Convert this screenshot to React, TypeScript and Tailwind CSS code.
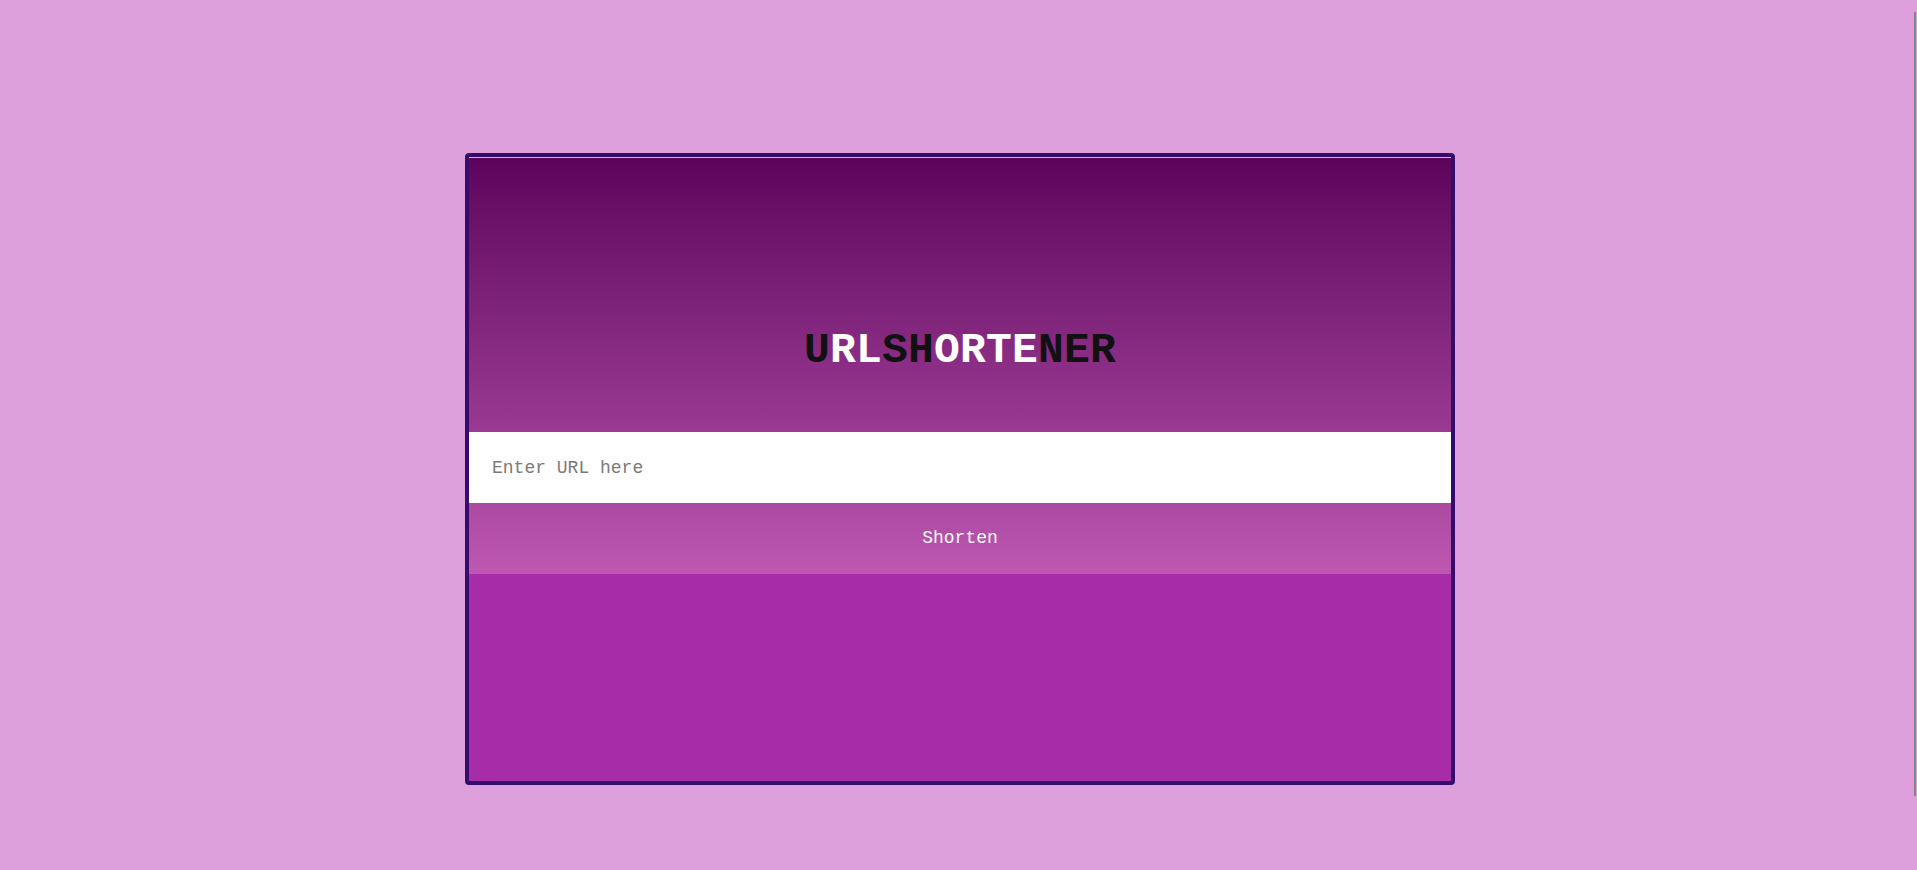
import React from "react";

export default function App() {
  const mono = { fontFamily: '"Liberation Mono", "Courier New", monospace' };
  return (
    <div className="min-h-[870px] w-full bg-[#dda0dd] relative overflow-hidden" style={mono}>
      <div className="flex justify-center pl-[3px] pt-[153px]">
        <div className="w-[990px] h-[632px] border-4 border-[#350b6c] rounded-[4px] bg-[#a72da8] flex flex-col overflow-hidden">
          <div className="h-[275px] border-t border-[#e4a8e4] bg-gradient-to-b from-[#5c045c] to-[#9b3993] flex items-end justify-center pb-[60px]">
            <h1 className="text-[43px] leading-[43px] font-bold tracking-[0.2px] m-0" style={mono}>
              <span className="text-[#111111]">U</span>
              <span className="text-white">RL</span>
              <span className="text-[#111111]">SH</span>
              <span className="text-white">ORTE</span>
              <span className="text-[#111111]">NER</span>
            </h1>
          </div>
          <input
            type="text"
            placeholder="Enter URL here"
            className="h-[71px] w-full bg-white pl-[23px] text-[18px] text-black placeholder:text-[#7a7a7a] outline-none border-0"
            style={mono}
          />
          <button
            className="h-[71px] w-full bg-gradient-to-b from-[#ab49a0] to-[#be58b2] text-white text-[18px] border-0"
            style={mono}
          >
            Shorten
          </button>
        </div>
      </div>
      <div className="absolute right-[1px] top-[12px] w-[2px] h-[784px] bg-[#858585]" />
    </div>
  );
}
